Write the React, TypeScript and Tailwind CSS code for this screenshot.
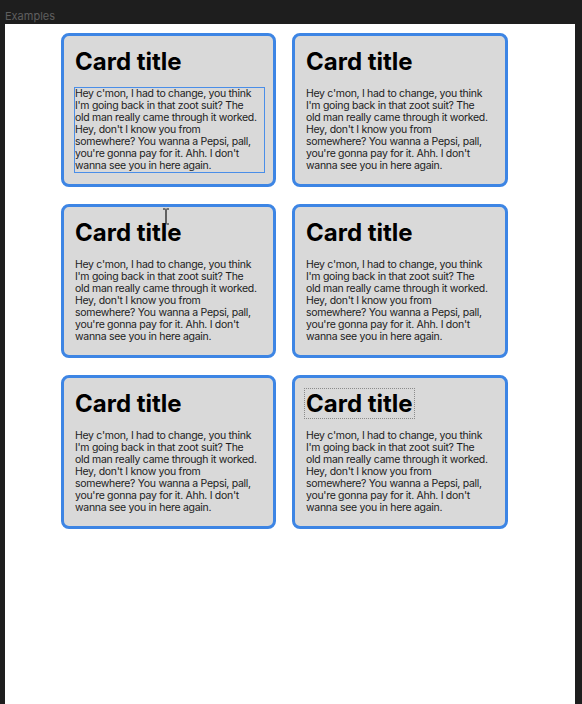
import React from 'react';

const lines = [
  "Hey c'mon, I had to change, you think",
  "I'm going back in that zoot suit? The",
  'old man really came through it worked.',
  "Hey, don't I know you from",
  'somewhere? You wanna a Pepsi, pall,',
  "you're gonna pay for it. Ahh. I don't",
  'wanna see you in here again.',
];

function Card({ selectedBody, selectedTitle }: { selectedBody?: boolean; selectedTitle?: boolean }) {
  return (
    <div className="h-[154px] rounded-[8px] border-[3px] border-[#3d85e4] bg-[#d9d9d9] p-[11px]">
      <h2
        className={
          'w-fit text-[24px] font-bold leading-[29px] text-black ' +
          (selectedTitle ? 'outline outline-1 outline-dotted outline-[#8a8a8a] -ml-[1px] pl-[1px] pr-[1px]' : '')
        }
      >
        Card title
      </h2>
      <p
        className={
          'mt-[12px] w-[189px] whitespace-nowrap text-[10.5px] leading-[12px] tracking-[-0.3px] text-[#1c1c1c] ' +
          (selectedBody ? 'outline outline-1 outline-[#4a8ee8]' : '')
        }
      >
        {lines.map((l) => (
          <span key={l} className="block">
            {l}
          </span>
        ))}
      </p>
    </div>
  );
}

export default function App() {
  return (
    <div className="relative h-[704px] w-[582px] overflow-hidden bg-[#1e1e1e] font-['Inter',sans-serif]">
      <div className="h-[24px] pl-[5px] pt-[9px] text-[11px] leading-[14px] text-[#5f5f5f]">Examples</div>
      <div className="ml-[5px] h-[680px] w-[570px] bg-white pl-[56px] pt-[9px]">
        <div className="grid grid-cols-[215px_216px] gap-x-[16px] gap-y-[17px]">
          <Card selectedBody />
          <Card />
          <Card />
          <Card />
          <Card />
          <Card selectedTitle />
        </div>
      </div>
      {/* text cursor */}
      <svg className="absolute left-[162px] top-[208px]" width="8" height="17" viewBox="0 0 8 17">
        <path d="M1 1h2.5M4.5 1H7M4 1.5v14M1 16h2.5M4.5 16H7" stroke="#111" strokeWidth="1.2" fill="none" />
      </svg>
    </div>
  );
}
